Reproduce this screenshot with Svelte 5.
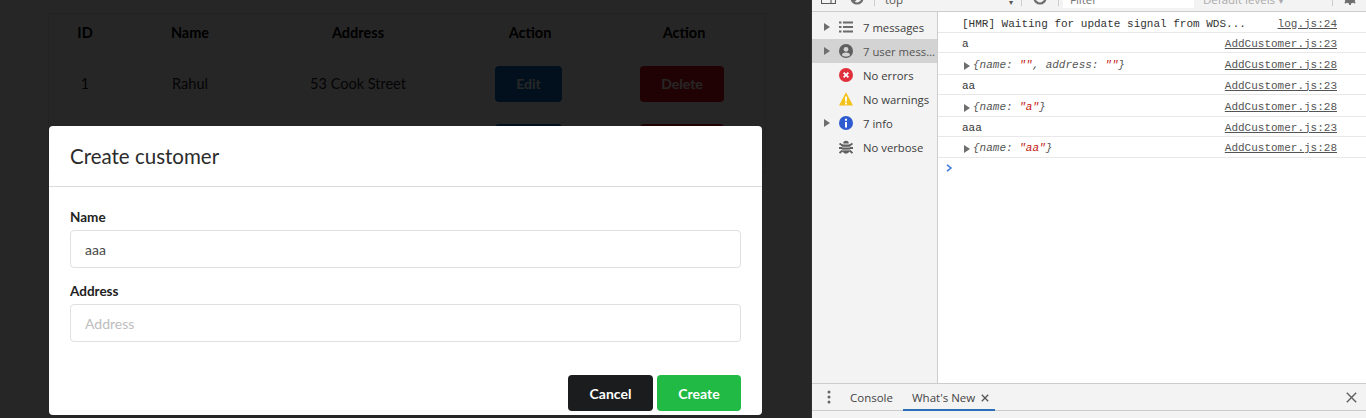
<script>
  const rows = [
    { id: '1', name: 'Rahul', address: '53 Cook Street', edit: 'Edit', del: 'Delete' },
    { id: '', name: '', address: '', edit: '', del: '' }
  ];
  const side = [
    { label: '7 messages', arrow: true, icon: 'list' },
    { label: '7 user mess…', arrow: true, icon: 'user', active: true },
    { label: 'No errors', icon: 'error' },
    { label: 'No warnings', icon: 'warn' },
    { label: '7 info', arrow: true, icon: 'info' },
    { label: 'No verbose', icon: 'bug' }
  ];
  const logs = [
    { text: 'a', src: 'AddCustomer.js:23' },
    { obj: [['name', '""'], ['address', '""']], src: 'AddCustomer.js:28' },
    { text: 'aa', src: 'AddCustomer.js:23' },
    { obj: [['name', '"a"']], src: 'AddCustomer.js:28' },
    { text: 'aaa', src: 'AddCustomer.js:23' },
    { obj: [['name', '"aa"']], src: 'AddCustomer.js:28' }
  ];
</script>

<div class="screen">
  <section class="page">
    <table>
      <thead>
        <tr><th class="c1">ID</th><th class="c2">Name</th><th class="c3">Address</th><th class="c4">Action</th><th class="c5">Action</th></tr>
      </thead>
      <tbody>
        {#each rows as r}
          <tr>
            <td>{r.id}</td><td>{r.name}</td><td>{r.address}</td>
            <td><button class="tb blue">{r.edit}</button></td>
            <td><button class="tb red">{r.del}</button></td>
          </tr>
        {/each}
      </tbody>
    </table>

    <div class="backdrop">
      <div class="modal">
        <h2>Create customer</h2>
        <div class="form">
          <label class="field"><span>Name</span><input value="aaa" /></label>
          <label class="field"><span>Address</span><input placeholder="Address" /></label>
        </div>
        <div class="actions">
          <button class="mb cancel">Cancel</button>
          <button class="mb create">Create</button>
        </div>
      </div>
    </div>
  </section>

  <section class="devtools">
    <div class="toolbar">
      <svg class="tool-a" width="15" height="16" viewBox="0 0 15 16"><path d="M.5 2.5h14v13H.5zM10 2.5v13" fill="none" stroke="#5a5a5a" stroke-width="1.1"/><path d="M7.5 7l-3 2.5 3 2.5z" fill="#5a5a5a"/></svg>
      <svg class="tool-b first" width="14" height="14" viewBox="0 0 14 14"><circle cx="7" cy="7" r="5.5" fill="none" stroke="#6e6e6e" stroke-width="2.2"/><path d="M3 11l8-8" stroke="#6e6e6e" stroke-width="2.2"/></svg>
      <span class="sep s1"></span>
      <span class="top">top</span>
      <span class="caret">▾</span>
      <span class="sep s2"></span>
      <svg class="tool-b" width="14" height="14" viewBox="0 0 14 14"><circle cx="7" cy="7" r="5.5" fill="none" stroke="#6e6e6e" stroke-width="2.2"/><circle cx="7" cy="7" r="1.5" fill="#6e6e6e"/></svg>
      <span class="sep s3"></span>
      <span class="filter">Filter</span>
      <span class="levels">Default levels ▾</span>
      <span class="sep"></span>
      <svg class="gear" width="14" height="14" viewBox="0 0 14 14"><circle cx="7" cy="7" r="4" fill="none" stroke="#6e6e6e" stroke-width="3"/><path d="M7 0v14M0 7h14M2 2l10 10M12 2L2 12" stroke="#6e6e6e" stroke-width="1.8"/></svg>
    </div>

    <div class="main">
      <aside class="sidebar">
        {#each side as s}
          <div class="side-row" class:active={s.active}>
            <span class="arrow">{#if s.arrow}<svg width="6" height="8" viewBox="0 0 6 8"><path d="M0 0l6 4-6 4z" fill="#6e6e6e"/></svg>{/if}</span>
            <span class="ico">
              {#if s.icon === 'list'}
                <svg width="14" height="14" viewBox="0 0 14 14"><path d="M0 2.5h2.5M4 2.5h10M0 7h2.5M4 7h10M0 11.5h2.5M4 11.5h10" stroke="#6b6b6b" stroke-width="2"/></svg>
              {:else if s.icon === 'user'}
                <svg width="14" height="14" viewBox="0 0 14 14"><circle cx="7" cy="7" r="7" fill="#5f5f5f"/><circle cx="7" cy="5.3" r="2.4" fill="#d3d3d3"/><path d="M2.8 11c.6-2 2.4-2.6 4.2-2.6s3.6.6 4.2 2.6c-2.2 2-6.2 2-8.4 0z" fill="#d3d3d3"/></svg>
              {:else if s.icon === 'error'}
                <svg width="14" height="14" viewBox="0 0 14 14"><circle cx="7" cy="7" r="7" fill="#e0303c"/><path d="M4.6 4.6l4.8 4.8M9.4 4.6l-4.8 4.8" stroke="#fff" stroke-width="1.8"/></svg>
              {:else if s.icon === 'warn'}
                <svg width="14" height="14" viewBox="0 0 14 14"><path d="M7 0.3L14 13.5H0z" fill="#f2c21b"/><path d="M7 4.5v5M7 10.5v2" stroke="#fff" stroke-width="1.8"/></svg>
              {:else if s.icon === 'info'}
                <svg width="14" height="14" viewBox="0 0 14 14"><circle cx="7" cy="7" r="7" fill="#2f5bd0"/><path d="M7 6v5.5M7 2.8v1.9" stroke="#fff" stroke-width="2"/></svg>
              {:else}
                <svg width="14" height="14" viewBox="0 0 14 14"><path d="M.5 3.5l3 2M13.5 3.5l-3 2M0 8h3M14 8h-3M.5 13l3-2.5M13.5 13l-3-2.5" stroke="#5f5f5f" stroke-width="1.9"/><path d="M4.2 3.6a2.8 2.8 0 0 1 5.6 0z" fill="#5f5f5f"/><path d="M2.8 4.4h8.4v4.4c0 3-1.9 4.9-4.2 4.9s-4.2-1.9-4.2-4.9z" fill="#5f5f5f"/><path d="M3 7.2h8M3 10h8" stroke="#f3f3f3" stroke-width=".7"/></svg>
              {/if}
            </span>
            <span class="side-label">{s.label}</span>
          </div>
        {/each}
      </aside>

      <div class="console">
        <div class="log first"><span class="msg">[HMR] Waiting for update signal from WDS...</span><a class="short">log.js:24</a></div>
        {#each logs as l, idx}
          <div class="log" class:objrow={l.obj} class:last={idx === logs.length - 1}>
            {#if l.obj}
              <span class="msg obj"><svg class="tri" width="6" height="8" viewBox="0 0 6 8"><path d="M0 0l6 4-6 4z" fill="#6e6e6e"/></svg><i>&#123;{#each l.obj as [k, v], i}{k}: <b>{v}</b>{i < l.obj.length - 1 ? ', ' : ''}{/each}&#125;</i></span>
            {:else}
              <span class="msg">{l.text}</span>
            {/if}
            <a>{l.src}</a>
          </div>
        {/each}
        <div class="prompt"><svg width="7" height="8" viewBox="0 0 7 8"><path d="M1 .8L5 4 1 7.2" fill="none" stroke="#3b78d8" stroke-width="1.5"/></svg></div>
      </div>
    </div>

    <div class="drawer">
      <svg class="dots" width="4" height="14" viewBox="0 0 4 14"><circle cx="2" cy="2" r="1.5" fill="#666"/><circle cx="2" cy="7" r="1.5" fill="#666"/><circle cx="2" cy="12" r="1.5" fill="#666"/></svg>
      <span class="tab con">Console</span>
      <span class="tab on">What's New<svg width="8" height="8" viewBox="0 0 8 8"><path d="M.8.8l6.4 6.4M7.2.8L.8 7.2" stroke="#555" stroke-width="1.3"/></svg></span>
      <svg class="close" width="11" height="11" viewBox="0 0 11 11"><path d="M.8.8l9.4 9.4M10.2.8L.8 10.2" stroke="#5f5f5f" stroke-width="1.4"/></svg>
    </div>
    <div class="drawer-body"></div>
  </section>
</div>

<style>
  :global(body) { margin: 0; }
  .screen { display: flex; width: 1366px; height: 418px; overflow: hidden; }

  .page { position: relative; width: 811px; flex: none; background: #fff; overflow: hidden; font-family: Lato, sans-serif; }
  table { border-collapse: collapse; table-layout: fixed; width: 716px; margin: 13px 0 0 48px; font-size: 14.5px; color: #212529; border: 1px solid #e0e0e0; }
  th { height: 36px; padding: 0 0 4px; text-align: center; font-weight: 700; color: #000; }
  td { height: 59px; padding: 0; text-align: center; }
  .c1 { width: 72px; } .c2 { width: 138px; } .c3 { width: 198px; } .c4 { width: 146px; } .c5 { width: 162px; }
  .tb { height: 36px; border: 0; border-radius: 4px; color: #fff; font: 700 14px Lato, sans-serif; }
  .blue { width: 67px; margin-right: 3px; background: #0a6ebd; }
  .red { width: 84px; margin-right: 4px; background: #dc0f1e; }

  .backdrop { position: absolute; inset: 0; display: flex; padding: 126px 49px 3px; box-sizing: border-box; background: rgba(0, 0, 0, .85); }
  .modal { flex: 1; background: #fff; border-radius: 4px; font-family: Lato, sans-serif; color: #212121; display: flex; flex-direction: column; }
  h2 { margin: 0; height: 60px; padding-left: 21px; line-height: 60px; font-size: 20.5px; font-weight: 400; border-bottom: 1px solid #dcdcdc; color: #2b2b2b; }
  .form { padding: 21px 21px 0; display: flex; flex-direction: column; gap: 14px; }
  .field { display: flex; flex-direction: column; gap: 4px; }
  .field span { font-size: 13.5px; font-weight: 700; line-height: 18px; height: 18px; color: #222; }
  input { height: 38px; box-sizing: border-box; border: 1px solid #e0e0e0; border-radius: 4px; padding: 0 14px; font: 14px Lato, sans-serif; color: #484848; outline: 0; background: #fff; }
  input::placeholder { color: #bdbdbd; opacity: 1; }
  .actions { margin-top: 33px; padding: 0 21px; display: flex; justify-content: flex-end; gap: 4px; }
  .mb { height: 36px; border: 0; border-radius: 4px; color: #fff; font: 700 14px Lato, sans-serif; }
  .cancel { width: 85px; background: #1b1c1d; }
  .create { width: 84px; background: #21ba45; }

  .devtools { flex: 1; min-width: 0; display: flex; flex-direction: column; border-left: 1px solid #333; box-sizing: border-box; background: #fff; font-family: "Open Sans", sans-serif; color: #444; }
  .toolbar { height: 11px; flex: none; display: flex; align-items: flex-end; overflow: hidden; background: #f3f3f3; border-bottom: 1px solid #ccc; font-size: 11.5px; color: #555; }
  .toolbar > * { flex: none; }
  .tool-a { margin: 0 0 7px 9px; }
  .tool-b { margin: 0 0 6px 11px; }
  .tool-b.first { margin-left: 14px; }
  .sep { width: 1px; height: 6px; background: #ccc; margin-bottom: 5px; }
  .s1 { margin-left: 10px; }
  .s2 { margin-left: 7px; }
  .s3 { margin-left: 11px; }
  .top { margin: 0 0 4px 10px; width: 17px; line-height: 14px; }
  .caret { width: 5px; margin: 0 0 5px 107px; font-size: 8px; line-height: 8px; }
  .filter { box-sizing: border-box; margin: 0 0 3px 4px; padding: 0 0 1px 7px; width: 131px; line-height: 14px; background: #fff; color: #777; }
  .levels { box-sizing: border-box; margin: 0 0 4px 9px; width: 129px; line-height: 14px; font-size: 11.5px; color: #aaa; }
  .gear { margin: 0 0 6px 10px; }

  .main { flex: 1; display: flex; min-height: 0; }
  .sidebar { width: 126px; flex: none; box-sizing: border-box; padding-top: 3px; background: #f3f3f3; border-right: 1px solid #ccc; }
  .side-row { height: 24px; display: flex; align-items: center; font-size: 11.3px; color: #3c3c3c; }
  .side-row.active { background: #d3d3d3; color: #555; }
  .arrow { width: 13px; margin-left: 12px; display: flex; }
  .ico { width: 14px; height: 14px; margin-left: 2px; display: flex; }
  .side-label { margin-left: 10px; white-space: nowrap; }

  .console { flex: 1; min-width: 0; font: 11px "Liberation Mono", monospace; color: #333; }
  .log { box-sizing: border-box; height: 20px; padding: 2px 29px 0 24px; display: flex; align-items: center; justify-content: space-between; border-bottom: 1px solid #e8e8e8; }
  .log.first { height: 21px; padding-top: 3px; }
  .log.objrow { height: 22px; }
  .log.last { height: 21px; }
  .msg { white-space: pre; }
  .obj { position: relative; }
  .tri { position: absolute; left: 2px; top: 3px; }
  .obj i { margin-left: 11px; font-style: italic; color: #555; }
  .obj b { font-weight: 400; color: #c41a16; }
  a { color: #545454; text-decoration: underline; }
  .prompt { padding: 6px 0 0 8px; line-height: 0; }

  .drawer { height: 26px; flex: none; display: flex; align-items: center; background: #f3f3f3; border-top: 1px solid #ccc; border-bottom: 1px solid #ccc; font-size: 11.5px; color: #444; }
  .dots { margin-left: 15px; flex: none; }
  .tab { height: 100%; box-sizing: border-box; display: flex; align-items: center; white-space: nowrap; }
  .con { margin-left: 19px; }
  .tab.on { margin-left: 10px; width: 92px; padding: 2px 0 0 9px; gap: 6px; border-bottom: 2px solid #2a6fb8; margin-bottom: -1px; height: 27px; }
  .tab.on svg { flex: none; }
  .close { margin-left: auto; margin-right: 9px; }
  .drawer-body { height: 7px; flex: none; background: #f3f3f3; }
</style>
